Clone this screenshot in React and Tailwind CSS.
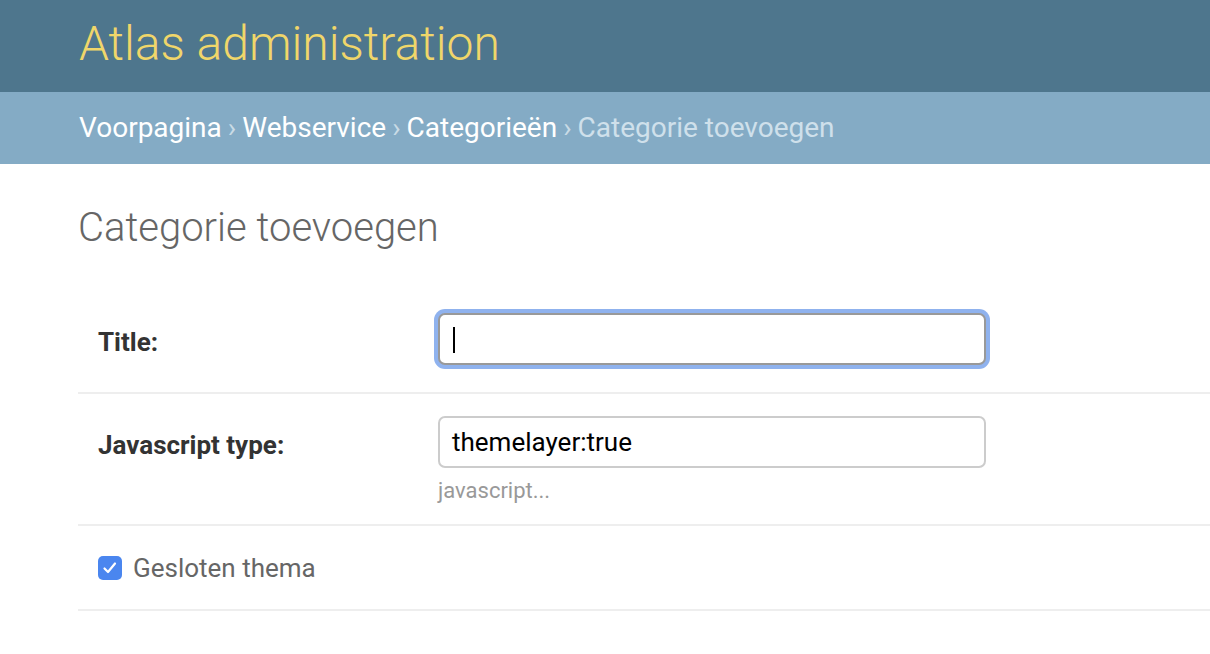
export default function App() {
  return (
    <div className="min-h-[654px] w-full bg-white" style={{ fontFamily: 'Roboto, "Liberation Sans", sans-serif' }}>
      <header className="h-[92px] bg-[#4e768d] flex items-center px-[79px]">
        <h1 className="text-[48px] font-light leading-none text-[#f0d66a] -mt-[4px]">Atlas administration</h1>
      </header>
      <nav className="h-[72px] bg-[#84abc5] flex items-center px-[79px] text-[28px] text-white">
        <span>Voorpagina</span>
        <span className="mx-[6px] text-[#c9dbe6]">›</span>
        <span>Webservice</span>
        <span className="mx-[6px] text-[#c9dbe6]">›</span>
        <span>Categorieën</span>
        <span className="mx-[6px] text-[#c9dbe6]">›</span>
        <span className="text-[#cfe0eb]">Categorie toevoegen</span>
      </nav>
      <main className="pl-[78px]">
        <h2 className="text-[40px] font-light text-[#666] leading-[48px] pt-[40px] pb-[41px]">Categorie toevoegen</h2>
        <div className="border-b-2 border-[#eeeeee] flex pt-[20px] pb-[27px]">
          <label className="relative top-[3px] w-[360px] pl-[20px] font-bold text-[26px] text-[#333] leading-[52px]">Title:</label>
          <div className="relative w-[548px] h-[52px] rounded-[7px] border-2 border-[#999] bg-white ring-4 ring-[#8fb2ee]">
            <span className="absolute left-[13px] top-[12px] w-[2px] h-[26px] bg-black" />
          </div>
        </div>
        <div className="border-b-2 border-[#eeeeee] flex pt-[22px] pb-[20px]">
          <label className="relative top-[3px] w-[360px] pl-[20px] font-bold text-[26px] text-[#333] leading-[52px]">Javascript type:</label>
          <div>
            <div className="w-[548px] h-[52px] rounded-[7px] border-2 border-[#cccccc] bg-white flex items-center px-[12px] text-[26px] text-black">themelayer:true</div>
            <div className="mt-[10px] text-[22px] leading-[26px] text-[#999]">javascript...</div>
          </div>
        </div>
        <div className="border-b-2 border-[#eeeeee] flex items-center pt-[28px] pb-[27px] pl-[20px] h-[85px] box-border">
          <span className="w-[24px] h-[24px] rounded-[5px] bg-[#4a86ef] flex items-center justify-center">
            <svg width="24" height="24" viewBox="0 0 24 24"><path d="M6.5 12.5 L10 16 L17 7.5" fill="none" stroke="white" strokeWidth="2.2" strokeLinecap="round" strokeLinejoin="round" /></svg>
          </span>
          <span className="ml-[11px] text-[26px] text-[#666]">Gesloten thema</span>
        </div>
      </main>
    </div>
  );
}
